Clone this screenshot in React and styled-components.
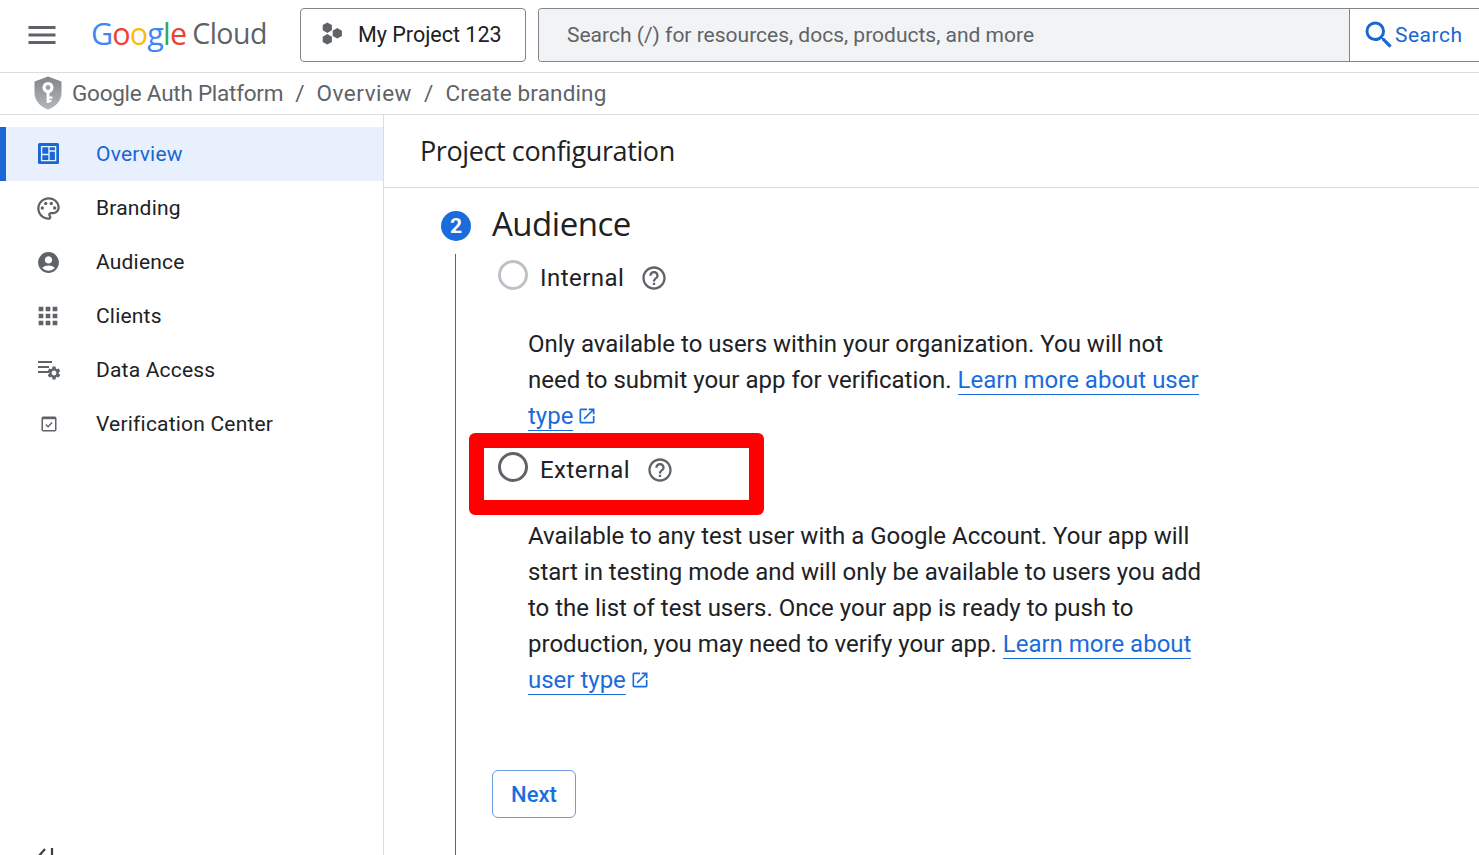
import React from "react";
import styled, { createGlobalStyle } from "styled-components";
import { MdMenu, MdOutlinePalette, MdAccountCircle, MdApps, MdOutlineHelpOutline, MdOpenInNew, MdSearch, MdSettings } from "react-icons/md";

const GlobalStyle = createGlobalStyle`
  html, body { margin: 0; padding: 0; height: 100%; background: #fff; overflow: hidden; }
  body { font-family: Roboto, "Liberation Sans", sans-serif; color: #202124; }
  * { box-sizing: border-box; }
`;

const Page = styled.div`
  height: 855px;
  display: flex;
  flex-direction: column;
  overflow: hidden;
`;

const Header = styled.header`
  height: 73px;
  flex: none;
  display: flex;
  align-items: flex-start;
  padding: 8px 0 0 24px;
  border-bottom: 1px solid #dadce0;
`;

const MenuButton = styled.div`
  width: 36px;
  height: 54px;
  display: flex;
  align-items: center;
  color: #5f6368;
  margin-right: 31px;
`;

const Logo = styled.div`
  width: 209px;
  height: 54px;
  padding-bottom: 4px;
  display: flex;
  align-items: center;
  font-family: "Open Sans", sans-serif;
  font-size: 28.5px;
  letter-spacing: -0.5px;
  color: #5f6368;
  white-space: nowrap;
`;

const LogoLetter = styled.span`
  color: ${(p) => p.$c};
`;

const LogoWord = styled.span`
  margin-right: 6px;
  font-size: 30.5px;
  font-weight: 500;
  letter-spacing: -0.85px;
`;

const ProjectButton = styled.div`
  width: 226px;
  height: 54px;
  flex: none;
  display: flex;
  align-items: center;
  padding: 0 0 2px 20px;
  gap: 13px;
  border: 1px solid #80868b;
  border-radius: 4px;
  font-size: 21.5px;
  color: #202124;
  margin-right: 12px;
`;

const SearchBox = styled.div`
  flex: 1;
  height: 54px;
  display: flex;
  border: 1px solid #80868b;
  border-right: none;
  border-radius: 4px 0 0 4px;
  overflow: hidden;
`;

const SearchInput = styled.div`
  width: 811px;
  height: 100%;
  flex: none;
  display: flex;
  align-items: center;
  padding-left: 28px;
  background: #f1f3f4;
  border-right: 1px solid #80868b;
  font-size: 21px;
  color: #5f6368;
`;

const SearchAction = styled.div`
  flex: 1;
  display: flex;
  align-items: center;
  padding-left: 11px;
  color: #1967d2;
  font-size: 21px;
  letter-spacing: 0.5px;
`;

const SearchLabel = styled.span`
  margin-left: -2px;
`;

const Breadcrumbs = styled.nav`
  height: 42px;
  flex: none;
  display: flex;
  align-items: center;
  padding: 0 0 2px 32px;
  border-bottom: 1px solid #dadce0;
  font-size: 22.5px;
  color: #5f6368;
`;

const CrumbIcon = styled.svg`
  width: 32px;
  height: 36px;
  margin-right: 8px;
  flex: none;
`;

const Crumb = styled.span`
  letter-spacing: ${(p) => p.$spacing}px;
`;

const Slash = styled.span`
  margin: 0 12px;
`;

const Body = styled.div`
  flex: 1;
  min-height: 0;
  display: flex;
`;

const Sidebar = styled.aside`
  width: 384px;
  flex: none;
  display: flex;
  flex-direction: column;
  padding-top: 12px;
  border-right: 1px solid #dadce0;
`;

const NavItem = styled.div`
  height: 54px;
  display: flex;
  align-items: center;
  font-size: 21px;
  letter-spacing: 0.2px;
  border-left: 6px solid ${(p) => (p.$active ? "#1967d2" : "transparent")};
  background: ${(p) => (p.$active ? "#e8f0fe" : "transparent")};
  color: ${(p) => (p.$active ? "#1967d2" : "#202124")};
`;

const NavIcon = styled.span`
  width: 84px;
  margin-right: 6px;
  flex: none;
  display: flex;
  align-items: center;
  justify-content: center;
  color: ${(p) => (p.$active ? "#1967d2" : "#5f6368")};
`;

const DataAccessWrap = styled.span`
  position: relative;
  width: 24px;
  height: 22px;
  display: inline-flex;
`;

const GearSpot = styled.span`
  position: absolute;
  right: -2px;
  bottom: 0;
  display: flex;
  color: #5f6368;
`;

const Collapse = styled.div`
  margin-top: auto;
  height: 7px;
  padding-left: 36px;
  overflow: hidden;
  color: #3c4043;
`;

const Main = styled.main`
  flex: 1;
  min-width: 0;
  display: flex;
  flex-direction: column;
`;

const TitleBar = styled.div`
  height: 73px;
  flex: none;
  display: flex;
  align-items: center;
  padding: 0 0 2px 36px;
  border-bottom: 1px solid #dadce0;
  font-family: "Open Sans", sans-serif;
  font-size: 27px;
  letter-spacing: -0.4px;
  color: #202124;
`;

const Stepper = styled.section`
  padding: 10px 0 0 57px;
  flex: 1;
  min-height: 0;
  display: flex;
  flex-direction: column;
`;

const StepHead = styled.div`
  height: 56px;
  flex: none;
  display: flex;
  align-items: center;
  gap: 21px;
`;

const StepNumber = styled.span`
  width: 30px;
  height: 30px;
  border-radius: 50%;
  background: #1a6bdc;
  color: #fff;
  font-size: 21px;
  font-weight: 700;
  display: flex;
  align-items: center;
  justify-content: center;
`;

const StepTitle = styled.h2`
  margin: 0 0 6px;
  font-family: "Open Sans", sans-serif;
  font-size: 33px;
  font-weight: 400;
  letter-spacing: -0.5px;
  color: #202124;
`;

const StepBody = styled.div`
  flex: 1;
  margin-left: 14px;
  padding-left: 42px;
  border-left: 1px solid #5f6368;
  display: flex;
  flex-direction: column;
`;

const OptionRow = styled.div`
  position: relative;
  height: 48px;
  display: flex;
  align-items: flex-start;
  padding-top: 6px;
  font-size: 24px;
`;

const Radio = styled.span`
  width: 30px;
  height: 30px;
  flex: none;
  margin-right: 12px;
  border-radius: 50%;
  border: 3px solid ${(p) => (p.$muted ? "#bdc1c6" : "#5f6368")};
`;

const OptionLabel = styled.span`
  margin-top: 2px;
  line-height: 32px;
  color: #202124;
  letter-spacing: 0.45px;
`;

const HelpIcon = styled.span`
  margin: 4px 0 0 16px;
  display: flex;
  color: #5f6368;
`;

const Highlight = styled.div`
  position: absolute;
  left: -29px;
  top: -13px;
  width: 295px;
  height: 82px;
  border: 15px solid #ff0000;
  border-radius: 6px;
  pointer-events: none;
`;

const Description = styled.p`
  margin: 24px 0 12px 30px;
  width: 690px;
  font-size: 24px;
  line-height: 36px;
  color: #202124;
`;

const LearnLink = styled.a`
  color: #1a6bdc;
  text-decoration: none;
  border-bottom: 1px solid #1a6bdc;
`;

const External = styled.span`
  display: inline-flex;
  vertical-align: -2px;
  margin-left: 4px;
  color: #1a6bdc;
`;

const NextButton = styled.button`
  width: 84px;
  height: 48px;
  margin: 60px 0 0 -6px;
  border: 1px solid #6a9be3;
  border-radius: 6px;
  background: #fff;
  color: #1a6fe0;
  font-family: Roboto, sans-serif;
  font-size: 22px;
  font-weight: 500;
`;

function ShieldIcon() {
  return (
    <CrumbIcon viewBox="0 0 32 36">
      <defs>
        <linearGradient id="shield" x1="0" x2="0" y1="0" y2="1">
          <stop offset="0" stopColor="#80868b" />
          <stop offset="1" stopColor="#b4b7ba" />
        </linearGradient>
      </defs>
      <path d="M16 1.5 29.5 6.5V18c0 7.5-5.6 13.6-13.5 16.5C8.1 31.6 2.5 25.5 2.5 18V6.5z" fill="url(#shield)" />
      <circle cx="16" cy="12.5" r="5.5" fill="#fff" />
      <circle cx="16" cy="12.5" r="2.4" fill="#9aa0a6" />
      <path d="M14.6 17h2.8v11h-2.8zM17.4 21.5h3v2.2h-3zM17.4 25h2v2h-2z" fill="#fff" />
    </CrumbIcon>
  );
}

function ProjectDots() {
  const hex = (cx, cy) =>
    [[-4.6, -2.6], [0, -5.2], [4.6, -2.6], [4.6, 2.6], [0, 5.2], [-4.6, 2.6]]
      .map(([x, y]) => `${cx + x},${cy + y}`)
      .join(" ");
  return (
    <svg width="24" height="24" viewBox="0 0 24 24" fill="#5f6368">
      <polygon points={hex(6.3, 5.7)} />
      <polygon points={hex(6.3, 17.3)} />
      <polygon points={hex(16.3, 11.3)} />
    </svg>
  );
}

function OverviewIcon() {
  return (
    <svg width="22" height="22" viewBox="0 0 22 22">
      <rect x="1" width="21" height="21" rx="1.5" fill="#1967d2" />
      <path d="M4.6 3.6h14v14h-14zM12 3.6v14M4.6 11.5H12M12 8h6.6" fill="none" stroke="#e8f0fe" strokeWidth="1.4" />
    </svg>
  );
}

function DataAccessIcon() {
  return (
    <DataAccessWrap>
      <svg width="24" height="22" viewBox="0 0 24 22" fill="#5f6368">
        <path d="M2 2h14v2H2zM2 7h11v2H2zM2 12h11v2H2z" />
      </svg>
      <GearSpot><MdSettings size={16} /></GearSpot>
    </DataAccessWrap>
  );
}

function VerifyIcon() {
  return (
    <svg width="22" height="22" viewBox="0 0 22 22" fill="none" stroke="#5f6368">
      <rect x="5.25" y="4.25" width="13.5" height="13.5" strokeWidth="1.5" rx="1" />
      <path d="M5 5.2h14" strokeWidth="2" />
      <path d="M8.8 11.5l2.3 2.2 4-4.2" strokeWidth="1.4" />
    </svg>
  );
}

function CollapseIcon() {
  return (
    <svg width="20" height="20" viewBox="0 0 20 20" fill="none" stroke="currentColor" strokeWidth="2.2">
      <path d="M9 1 2 9l7 8M16 0v18" />
    </svg>
  );
}

const googleLetters = [
  ["G", "#4285f4"],
  ["o", "#ea4335"],
  ["o", "#fbbc04"],
  ["g", "#4285f4"],
  ["l", "#34a853"],
  ["e", "#ea4335"],
];

const navItems = [
  { label: "Overview", icon: <OverviewIcon />, active: true },
  { label: "Branding", icon: <MdOutlinePalette size={27} /> },
  { label: "Audience", icon: <MdAccountCircle size={25} /> },
  { label: "Clients", icon: <MdApps size={28} /> },
  { label: "Data Access", icon: <DataAccessIcon /> },
  { label: "Verification Center", icon: <VerifyIcon /> },
];

export default function App() {
  return (
    <Page>
      <GlobalStyle />
      <Header>
        <MenuButton><MdMenu size={36} /></MenuButton>
        <Logo>
          <LogoWord>
            {googleLetters.map(([l, c], i) => <LogoLetter key={i} $c={c}>{l}</LogoLetter>)}
          </LogoWord>
          Cloud
        </Logo>
        <ProjectButton><ProjectDots />My Project 123</ProjectButton>
        <SearchBox>
          <SearchInput>Search (/) for resources, docs, products, and more</SearchInput>
          <SearchAction><MdSearch size={36} /><SearchLabel>Search</SearchLabel></SearchAction>
        </SearchBox>
      </Header>
      <Breadcrumbs>
        <ShieldIcon />
        <Crumb $spacing={-0.25}>Google Auth Platform</Crumb>
        <Slash>/</Slash>
        <Crumb $spacing={0.55}>Overview</Crumb>
        <Slash>/</Slash>
        <Crumb $spacing={0.15}>Create branding</Crumb>
      </Breadcrumbs>
      <Body>
        <Sidebar>
          {navItems.map((item) => (
            <NavItem key={item.label} $active={item.active}>
              <NavIcon $active={item.active}>{item.icon}</NavIcon>
              {item.label}
            </NavItem>
          ))}
          <Collapse><CollapseIcon /></Collapse>
        </Sidebar>
        <Main>
          <TitleBar>Project configuration</TitleBar>
          <Stepper>
            <StepHead>
              <StepNumber>2</StepNumber>
              <StepTitle>Audience</StepTitle>
            </StepHead>
            <StepBody>
              <OptionRow>
                <Radio $muted />
                <OptionLabel>Internal</OptionLabel>
                <HelpIcon><MdOutlineHelpOutline size={28} /></HelpIcon>
              </OptionRow>
              <Description>
                Only available to users within your organization. You will not need to submit your app for verification.{" "}
                <LearnLink>Learn more about user type</LearnLink>
                <External><MdOpenInNew size={20} /></External>
              </Description>
              <OptionRow>
                <Radio />
                <OptionLabel>External</OptionLabel>
                <HelpIcon><MdOutlineHelpOutline size={28} /></HelpIcon>
                <Highlight />
              </OptionRow>
              <Description>
                Available to any test user with a Google Account. Your app will start in testing mode and will only be available to users you add to the list of test users. Once your app is ready to push to production, you may need to verify your app.{" "}
                <LearnLink>Learn more about user type</LearnLink>
                <External><MdOpenInNew size={20} /></External>
              </Description>
              <NextButton>Next</NextButton>
            </StepBody>
          </Stepper>
        </Main>
      </Body>
    </Page>
  );
}
